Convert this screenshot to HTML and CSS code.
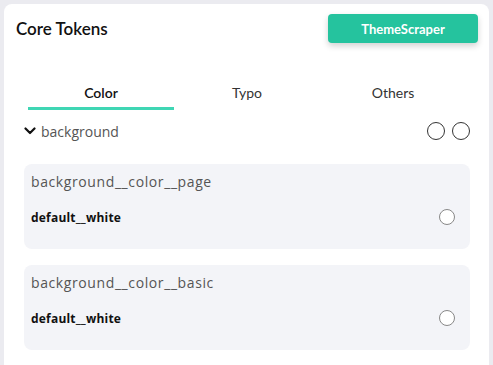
FILE: index.html
```html
<!DOCTYPE html>
<html lang="en">
<head>
<meta charset="utf-8">
<title>Core Tokens</title>
<link rel="stylesheet" href="styles.css">
</head>
<body>
<div class="panel">
  <header class="header">
    <h1 class="title">Core Tokens</h1>
    <button class="btn">ThemeScraper</button>
  </header>
  <nav class="tabs">
    <div class="tab active">Color</div>
    <div class="tab">Typo</div>
    <div class="tab">Others</div>
  </nav>
  <section class="group">
    <div class="group-head">
      <div class="group-label">
        <svg class="chev" width="12" height="8" viewBox="0 0 12 8"><path d="M1.5 1.5 L6 6 L10.5 1.5" fill="none" stroke="#111" stroke-width="2.2" stroke-linecap="round" stroke-linejoin="round"/></svg>
        <span>background</span>
      </div>
      <div class="circles">
        <span class="circle"></span>
        <span class="circle"></span>
      </div>
    </div>
    <div class="item">
      <div class="item-name">background__color__page</div>
      <div class="item-row">
        <span class="item-value">default__white</span>
        <span class="radio"></span>
      </div>
    </div>
    <div class="item">
      <div class="item-name">background__color__basic</div>
      <div class="item-row">
        <span class="item-value">default__white</span>
        <span class="radio"></span>
      </div>
    </div>
  </section>
</div>
</body>
</html>
```
FILE: styles.css
```css
html, body {
  margin: 0;
  padding: 0;
}
body {
  background: #ebebf0;
  font-family: "Lato", "Noto Sans", sans-serif;
  color: #111;
  height: 365px;
  overflow: hidden;
}
.panel {
  margin: 4px 4px 0 4px;
  background: #fff;
  border-radius: 8px 8px 0 0;
  padding: 10px 11px 20px 12px;
  min-height: 400px;
}
.header {
  display: flex;
  justify-content: space-between;
  align-items: center;
}
.title {
  margin: 0;
  font-size: 17px;
  font-weight: 600;
  color: #111;
}
.btn {
  width: 150px;
  height: 29px;
  border: 0;
  border-radius: 4px;
  background: #25c39e;
  color: #fff;
  font-family: inherit;
  font-size: 13px;
  font-weight: 700;
  box-shadow: 0 3px 6px rgba(0, 0, 0, 0.18);
}
.tabs {
  display: flex;
  margin: 32px 12px 0 12px;
}
.tab {
  flex: 1;
  height: 35px;
  box-sizing: border-box;
  display: flex;
  align-items: center;
  justify-content: center;
  font-size: 14px;
  color: #333;
  padding-top: 2px;
  border-bottom: 3px solid transparent;
}
.tab.active {
  color: #111;
  font-weight: 600;
  border-bottom-color: #3fd6b4;
}
.group {
  padding: 0 8px;
}
.group-head {
  display: flex;
  justify-content: space-between;
  align-items: center;
  height: 24px;
  margin-top: 9px;
}
.group-label {
  display: flex;
  align-items: center;
  gap: 5px;
  font-family: "Open Sans", "Noto Sans", sans-serif;
  font-size: 14px;
  color: #555;
}
.circles {
  display: flex;
  gap: 7px;
}
.circle {
  width: 18px;
  height: 18px;
  box-sizing: border-box;
  border: 1.4px solid #333;
  border-radius: 50%;
}
.item {
  background: #f3f4f8;
  border-radius: 8px;
  margin-top: 21px;
  padding: 8px 7px 24px 7px;
  font-family: "Open Sans", "Noto Sans", sans-serif;
}
.item + .item {
  margin-top: 16px;
}
.item-name {
  font-size: 14px;
  line-height: 20px;
  color: #555;
  letter-spacing: 0.6px;
}
.item-row {
  display: flex;
  justify-content: space-between;
  align-items: center;
  margin-top: 17px;
  height: 16px;
}
.item-value {
  font-size: 12px;
  font-weight: 700;
  color: #111;
  letter-spacing: 0.2px;
}
.radio {
  width: 16px;
  height: 16px;
  box-sizing: border-box;
  border: 1.2px solid #888;
  border-radius: 50%;
  background: #fff;
  margin-right: 8px;
}
```
